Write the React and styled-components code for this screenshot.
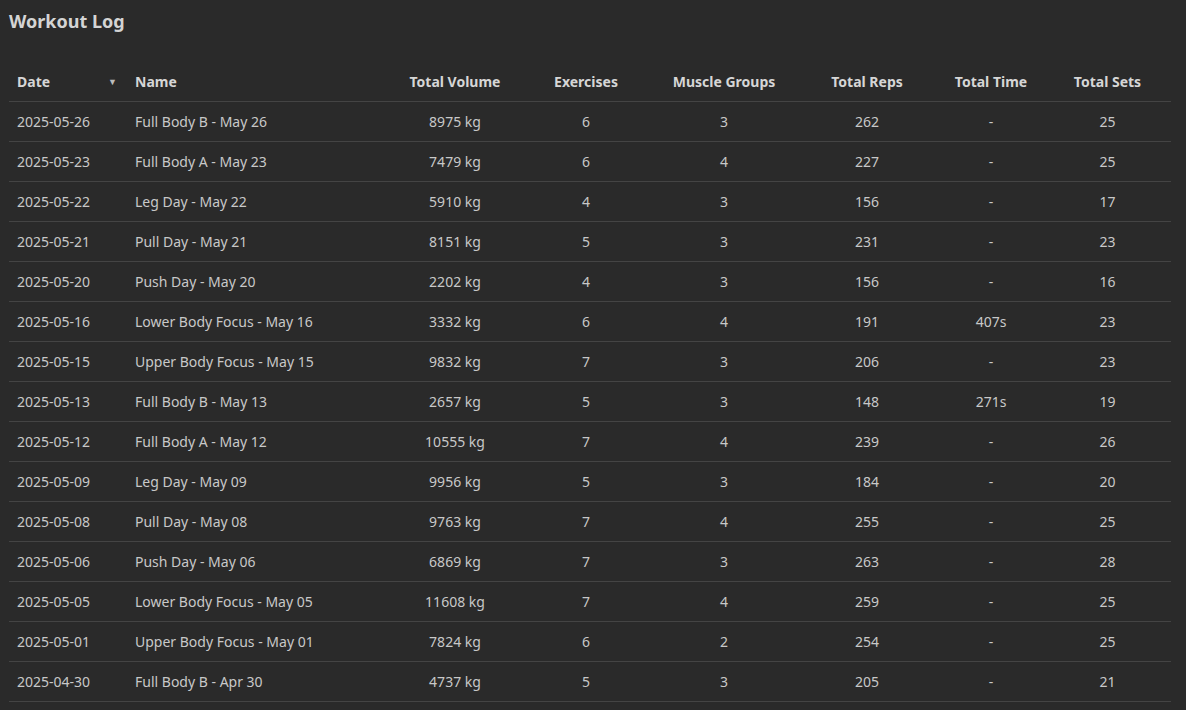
import React from "react";
import styled, { createGlobalStyle } from "styled-components";

const Global = createGlobalStyle`
  html, body { margin: 0; background: #2a2a2a; }
  body { font-family: "Noto Sans", "Open Sans", sans-serif; color: #d0d0d0; }
`;

const Page = styled.div`
  padding: 8px 15px 0 9px;
`;
const Title = styled.h1`
  margin: 0 0 27px 0;
  font-size: 18px;
  font-weight: 700;
  color: #d4d4d4;
  line-height: 26px;
`;
const Table = styled.table`
  width: 1162px;
  border-collapse: collapse;
  table-layout: fixed;
  font-size: 14px;
`;
const Th = styled.th`
  height: 40px;
  padding: 0 8px;
  font-weight: 700;
  color: #d6d6d6;
  text-align: ${(p) => p.$align || "center"};
  border-bottom: 1px solid #444;
  position: relative;
`;
const Td = styled.td`
  height: 39px;
  padding: 0 8px;
  color: #c8c8c8;
  text-align: ${(p) => p.$align || "center"};
  border-bottom: 1px solid #444;
  white-space: nowrap;
`;
const Arrow = styled.span`
  position: absolute;
  right: 10px;
  top: 14px;
  font-size: 9px;
  color: #bbb;
`;

const rows = [
  ["2025-05-26","Full Body B - May 26","8975 kg",6,3,262,"-",25],
  ["2025-05-23","Full Body A - May 23","7479 kg",6,4,227,"-",25],
  ["2025-05-22","Leg Day - May 22","5910 kg",4,3,156,"-",17],
  ["2025-05-21","Pull Day - May 21","8151 kg",5,3,231,"-",23],
  ["2025-05-20","Push Day - May 20","2202 kg",4,3,156,"-",16],
  ["2025-05-16","Lower Body Focus - May 16","3332 kg",6,4,191,"407s",23],
  ["2025-05-15","Upper Body Focus - May 15","9832 kg",7,3,206,"-",23],
  ["2025-05-13","Full Body B - May 13","2657 kg",5,3,148,"271s",19],
  ["2025-05-12","Full Body A - May 12","10555 kg",7,4,239,"-",26],
  ["2025-05-09","Leg Day - May 09","9956 kg",5,3,184,"-",20],
  ["2025-05-08","Pull Day - May 08","9763 kg",7,4,255,"-",25],
  ["2025-05-06","Push Day - May 06","6869 kg",7,3,263,"-",28],
  ["2025-05-05","Lower Body Focus - May 05","11608 kg",7,4,259,"-",25],
  ["2025-05-01","Upper Body Focus - May 01","7824 kg",6,2,254,"-",25],
  ["2025-04-30","Full Body B - Apr 30","4737 kg",5,3,205,"-",21],
];

const widths = [118, 263, 130, 132, 144, 142, 106, 127];
const heads = ["Date","Name","Total Volume","Exercises","Muscle Groups","Total Reps","Total Time","Total Sets"];

export default function App() {
  return (
    <Page>
      <Global />
      <Title>Workout Log</Title>
      <Table>
        <colgroup>{widths.map((w, i) => <col key={i} style={{ width: w }} />)}</colgroup>
        <thead>
          <tr>
            {heads.map((h, i) => (
              <Th key={h} $align={i < 2 ? "left" : "center"}>
                {h}
                {i === 0 && <Arrow>▼</Arrow>}
              </Th>
            ))}
          </tr>
        </thead>
        <tbody>
          {rows.map((r) => (
            <tr key={r[0]}>
              {r.map((c, i) => (
                <Td key={i} $align={i < 2 ? "left" : "center"}>{c}</Td>
              ))}
            </tr>
          ))}
        </tbody>
      </Table>
    </Page>
  );
}
